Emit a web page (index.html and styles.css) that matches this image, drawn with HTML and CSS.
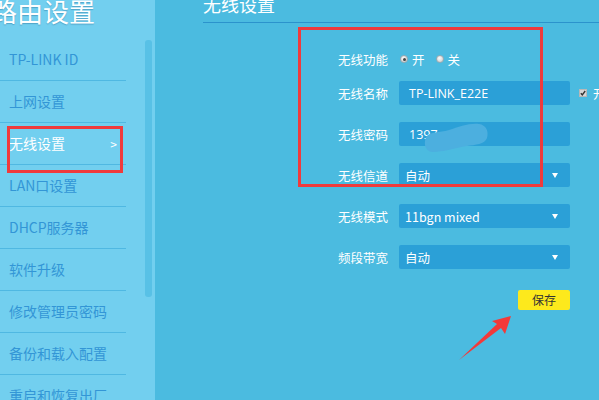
FILE: index.html
```html
<!DOCTYPE html>
<html lang="zh-CN">
<head>
<meta charset="utf-8">
<title>无线设置</title>
<link rel="stylesheet" href="styles.css">
</head>
<body>
<div class="page">
  <aside class="sidebar">
    <div class="side-title">路由设置</div>
    <ul class="menu">
      <li class="menu-item">TP-LINK ID</li>
      <li class="menu-item">上网设置</li>
      <li class="menu-item active">无线设置<span class="chev">&gt;</span></li>
      <li class="menu-item">LAN口设置</li>
      <li class="menu-item">DHCP服务器</li>
      <li class="menu-item">软件升级</li>
      <li class="menu-item">修改管理员密码</li>
      <li class="menu-item">备份和载入配置</li>
      <li class="menu-item">重启和恢复出厂</li>
    </ul>
    <div class="scroll-thumb"></div>
    <div class="mark mark-side"></div>
  </aside>
  <main class="main">
    <h1 class="heading">无线设置</h1>
    <div class="form">
      <div class="row row-radio">
        <span class="label">无线功能</span>
        <span class="radio checked"></span><span class="opt">开</span>
        <span class="radio"></span><span class="opt">关</span>
      </div>
      <div class="row">
        <span class="label">无线名称</span>
        <span class="field">TP-LINK_E22E</span>
        <span class="check"><svg width="6" height="6" viewBox="0 0 6 6"><path d="M0.8 3.2 L2.3 4.8 L5.2 1" fill="none" stroke="#333" stroke-width="1.4"/></svg></span><span class="opt">开启</span>
      </div>
      <div class="row">
        <span class="label">无线密码</span>
        <span class="field pw">1397<svg class="blur" width="66" height="30" viewBox="0 0 66 30"><path d="M3 14 C8 8 16 10 26 7 C36 4 46 0 56 1 C63 2 66 8 64 15 C62 21 52 22 44 23 C32 25 20 29 10 29 C3 29 0 22 3 14 Z" fill="#4cafdf"/></svg></span>
      </div>
      <div class="row">
        <span class="label">无线信道</span>
        <span class="field select">自动<span class="caret"></span></span>
      </div>
      <div class="row">
        <span class="label">无线模式</span>
        <span class="field select">11bgn mixed<span class="caret"></span></span>
      </div>
      <div class="row">
        <span class="label">频段带宽</span>
        <span class="field select">自动<span class="caret"></span></span>
      </div>
      <div class="row row-btn">
        <span class="label"></span>
        <span class="btn-wrap"><span class="btn">保存</span></span>
      </div>
    </div>
    <div class="mark mark-main"></div>
    <svg class="arrow" width="60" height="50" viewBox="455 312 60 50">
      <polygon points="459,360 497,324 492,321 511,316 505,334 501,328" fill="#f23a3a"/>
    </svg>
  </main>
</div>
</body>
</html>
```
FILE: styles.css
```css
html, body {
  margin: 0;
  padding: 0;
  width: 599px;
  height: 400px;
  overflow: hidden;
}
body {
  font-family: "Noto Sans CJK SC", "Noto Sans", sans-serif;
  background: #4bbbe0;
}
.page {
  display: flex;
  width: 599px;
  height: 400px;
}
.sidebar {
  position: relative;
  width: 155px;
  flex: none;
  background: #72cfef;
}
.side-title {
  margin: -2px 0 0 -9px;
  font-size: 26px;
  line-height: 26px;
  color: #fff;
  text-shadow: 0 1px 1px rgba(20, 90, 130, 0.35);
  white-space: nowrap;
}
.menu {
  list-style: none;
  margin: 15px 0 0 0;
  padding: 0;
  width: 126px;
}
.menu-item {
  height: 41px;
  border-bottom: 1px solid #4fb8e2;
  padding-left: 9px;
  font-size: 14px;
  line-height: 41px;
  color: #3396d6;
  white-space: nowrap;
  display: flex;
  justify-content: space-between;
  padding-right: 9px;
}
.menu-item.active {
  color: #fff;
}
.chev {
  font-size: 12px;
}
.scroll-thumb {
  position: absolute;
  left: 145px;
  top: 40px;
  width: 7px;
  height: 257px;
  border-radius: 3px;
  background: #58c1e6;
}
.mark {
  position: absolute;
  border: 3px solid #f03a3c;
  box-sizing: border-box;
}
.mark-side {
  left: 7px;
  top: 126px;
  width: 116px;
  height: 47px;
}
.main {
  position: relative;
  flex: 1;
  padding-left: 48px;
}
.heading {
  margin: -5px 0 0 0;
  padding-bottom: 9px;
  font-size: 18px;
  line-height: 18px;
  font-weight: normal;
  color: #fff;
  border-bottom: 1px solid #2b93cc;
}
.form {
  display: flex;
  flex-direction: column;
  gap: 17px;
  margin-top: 24px;
  margin-left: 105px;
}
.row {
  display: flex;
  align-items: center;
  height: 24px;
  font-size: 12.5px;
  color: #fff;
  white-space: nowrap;
}
.row-radio {
  margin-bottom: -7px;
}
.label {
  width: 80px;
  text-align: right;
  margin-right: 11px;
  flex: none;
}
.radio {
  width: 8px;
  height: 8px;
  border-radius: 50%;
  background: radial-gradient(circle at 40% 35%, #fafafa, #c8c8c8);
  border: 1px solid #9aa9b0;
  box-sizing: border-box;
  margin: 0 4px 0 1px;
  position: relative;
}
.radio.checked::after {
  content: "";
  position: absolute;
  left: 1.5px;
  top: 1.5px;
  width: 3px;
  height: 3px;
  border-radius: 50%;
  background: #444;
}
.opt {
  margin-right: 10px;
}
.field {
  position: relative;
  display: flex;
  align-items: center;
  width: 171px;
  height: 24px;
  box-sizing: border-box;
  padding-left: 10px;
  background: #2ba0d7;
  border-radius: 2px;
  font-family: "Open Sans", "Noto Sans CJK SC", sans-serif;
  font-size: 12.5px;
  color: #fff;
}
.select {
  padding-left: 6px;
  font-family: "Noto Sans CJK SC", sans-serif;
}
.caret {
  position: absolute;
  right: 12px;
  top: 10px;
  width: 0;
  height: 0;
  border-left: 3.5px solid transparent;
  border-right: 3.5px solid transparent;
  border-top: 5px solid #fff;
}
.check {
  display: flex;
  align-items: center;
  justify-content: center;
  width: 8px;
  height: 8px;
  margin: 0 6px 0 9px;
  background: #d6d6d6;
  border: 1px solid #b8b8b8;
  box-sizing: border-box;
}
.blur {
  position: absolute;
  left: 24px;
  top: 1px;
}
.row-btn {
  margin-top: 4px;
  height: 20px;
}
.btn-wrap {
  display: flex;
  justify-content: flex-end;
  width: 171px;
}
.btn {
  width: 52px;
  height: 20px;
  line-height: 20px;
  text-align: center;
  background: #fde91c;
  border-radius: 2px;
  color: #333;
  font-size: 12px;
}
.mark-main {
  left: 143px;
  top: 27px;
  width: 245px;
  height: 160px;
}
.arrow {
  position: absolute;
  left: 300px;
  top: 312px;
}
```
